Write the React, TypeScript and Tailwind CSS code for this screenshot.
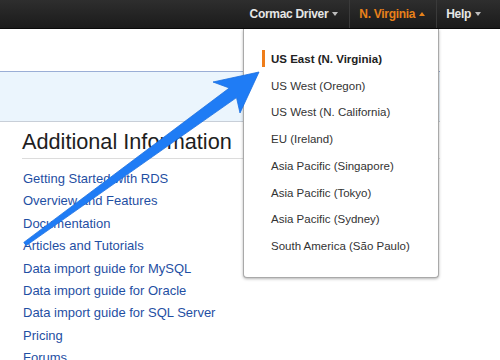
import React from "react";

const regions = [
  "US East (N. Virginia)",
  "US West (Oregon)",
  "US West (N. California)",
  "EU (Ireland)",
  "Asia Pacific (Singapore)",
  "Asia Pacific (Tokyo)",
  "Asia Pacific (Sydney)",
  "South America (São Paulo)",
];

const links = [
  "Getting Started with RDS",
  "Overview and Features",
  "Documentation",
  "Articles and Tutorials",
  "Data import guide for MySQL",
  "Data import guide for Oracle",
  "Data import guide for SQL Server",
  "Pricing",
  "Forums",
];

function Caret({ up, color }: { up?: boolean; color: string }) {
  return (
    <svg width="6" height="4" viewBox="0 0 6 4" className="ml-[4px]">
      <polygon points={up ? "0,4 6,4 3,0" : "0,0 6,0 3,4"} fill={color} />
    </svg>
  );
}

function NavItem({ label, up, active }: { label: string; up?: boolean; active?: boolean }) {
  return (
    <div
      className={`flex items-center pl-[9px] pr-[11px] text-[12px] tracking-[-0.3px] font-bold ${
        active ? "text-[#e8811a]" : "text-[#e6e6e6]"
      }`}
    >
      {label}
      <Caret up={up} color={active ? "#e8811a" : "#bdbdbd"} />
    </div>
  );
}

export default function App() {
  return (
    <div className="relative w-[500px] h-[360px] overflow-hidden bg-white font-['Liberation_Sans',Arial,sans-serif]">
      {/* top bar */}
      <header className="h-[29px] flex justify-end items-center pr-[8px] bg-gradient-to-b from-[#2e2e2e] to-[#1b1b1b] border-b border-[#0a0a0a]">
        <NavItem label="Cormac Driver" />
        <div className="w-px h-[28px] bg-[#3a3a3a]" />
        <NavItem label="N. Virginia" up active />
        <div className="w-px h-[28px] bg-[#3a3a3a]" />
        <NavItem label="Help" />
      </header>

      {/* page body */}
      <div className="w-[440px] flex flex-col">
        <div className="mt-[42px] h-[51px] bg-[#ebf5fd] border-t border-[#9aaed6] border-b border-b-[#c8cfd8]" />
        <div className="ml-[22px] mt-[7px] border-b border-[#dcdcdc] pb-[3px]">
          <h2 className="text-[21.7px] leading-[26px] text-[#1e1e1e]">Additional Information</h2>
        </div>
        <ul className="ml-[23px] mt-[9px] flex flex-col">
          {links.map((l) => (
            <li key={l} className="h-[22.4px] leading-[22.4px] text-[13px] text-[#1f4fa3]">
              {l}
            </li>
          ))}
        </ul>
      </div>

      {/* region dropdown */}
      <div className="absolute left-[243px] top-[29px] w-[196px] h-[249px] bg-white border border-[#a9a9a9] border-t-0 rounded-b-[4px] shadow-[0_1px_3px_rgba(0,0,0,0.3)] pt-[17px]">
        {regions.map((r, i) => (
          <div key={r} className="relative h-[26.75px] flex items-center pl-[27px]">
            {i === 0 && <div className="absolute left-[18px] top-[4px] w-[3px] h-[17px] bg-[#ef7d1a]" />}
            <span className={`text-[11.5px] ${i === 0 ? "font-bold text-[#222]" : "text-[#333]"}`}>{r}</span>
          </div>
        ))}
      </div>

      {/* callout arrow */}
      <svg className="absolute inset-0 pointer-events-none" width="500" height="360" viewBox="0 0 500 360">
        <polygon
          points="23.8,242.4 229.3,88 213,82 259,72 240,113 236.5,97.6 26.2,245.6"
          fill="#1f7cf5"
          stroke="#1a6fe0"
          strokeWidth="0.8"
          strokeLinejoin="round"
        />
      </svg>
    </div>
  );
}
